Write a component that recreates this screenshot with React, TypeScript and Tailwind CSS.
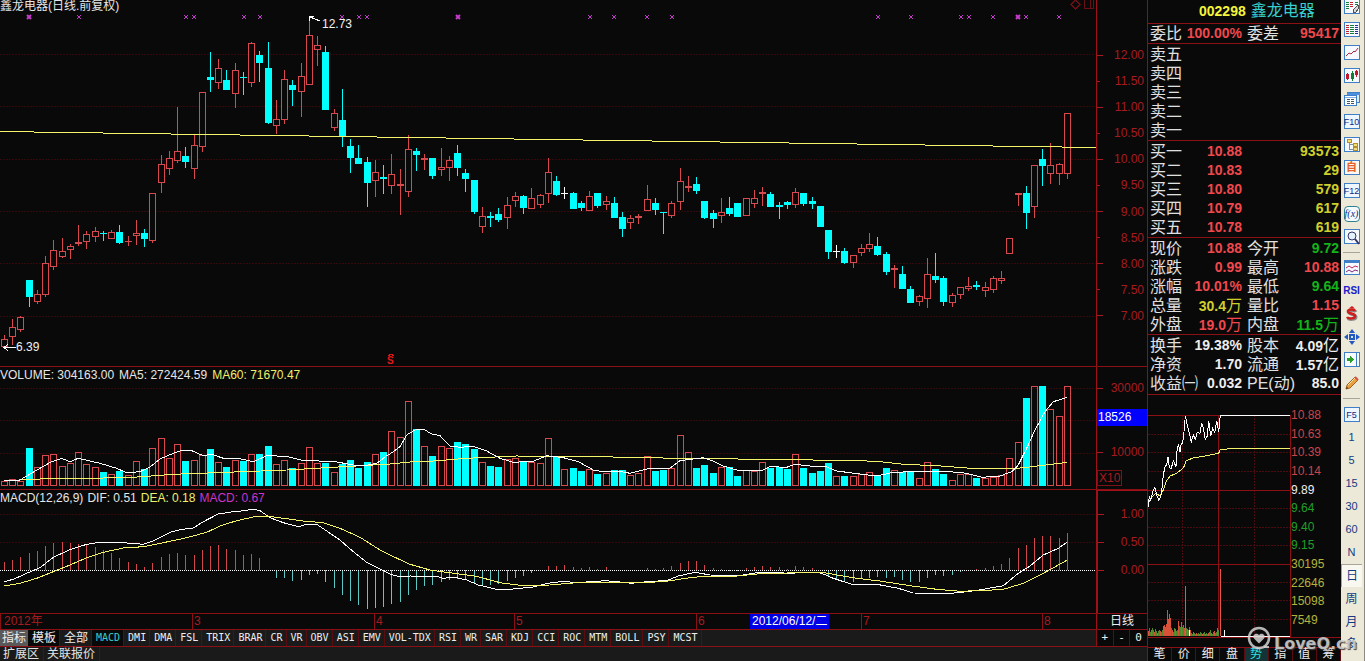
import React from "react";

type Kind = "u" | "d" | "n";
type Bar = [Kind, number, number, number, number, number, number];

// One row per trading day: kind, body top, body bottom, high, low, volume top, MACD tip.
// Volume and MACD heights are kept in thirds of a pixel below the volume pane's origin.
const DAYS: Bar[] = [
  ["u", 339, 347, 335, 348, 349, 591], ["u", 327, 337, 319, 345, 342, 585], ["u", 317, 330, 316, 332, 347, 576],
  ["d", 280, 297, 280, 307, 249, 564], ["u", 294, 302, 290, 304, 306, 557], ["u", 263, 295, 256, 297, 270, 543],
  ["u", 250, 267, 240, 270, 267, 533], ["u", 251, 257, 238, 258, 303, 530], ["u", 246, 250, 244, 259, 294, 533],
  ["u", 242, 243, 225, 246, 261, 538], ["u", 234, 242, 231, 249, 297, 540], ["u", 231, 237, 227, 242, 306, 545],
  ["d", 233, 233, 231, 241, 321, 555], ["u", 232, 239, 230, 239, 327, 565], ["d", 232, 243, 225, 244, 318, 579],
  ["u", 241, 241, 236, 246, 330, 591], ["u", 233, 236, 220, 245, 288, 597], ["d", 233, 239, 229, 247, 312, 606],
  ["u", 193, 241, 193, 243, 249, 594], ["u", 164, 183, 155, 193, 219, 576], ["u", 158, 169, 151, 175, 279, 567],
  ["u", 151, 161, 107, 163, 237, 564], ["d", 156, 162, 147, 168, 288, 570], ["u", 145, 169, 135, 179, 285, 570],
  ["u", 92, 147, 92, 152, 270, 555], ["d", 77, 80, 52, 92, 252, 543], ["u", 68, 83, 59, 89, 291, 540],
  ["d", 80, 90, 70, 90, 306, 552], ["u", 70, 94, 63, 108, 285, 555], ["d", 77, 77, 72, 95, 288, 570],
  ["u", 43, 83, 42, 87, 267, 567], ["d", 55, 63, 51, 82, 267, 579], ["d", 68, 123, 42, 124, 243, 617],
  ["u", 119, 126, 100, 134, 297, 640], ["u", 79, 120, 70, 124, 285, 640], ["d", 85, 90, 80, 106, 309, 648],
  ["u", 76, 92, 63, 117, 294, 645], ["u", 35, 85, 17, 85, 246, 630], ["u", 45, 50, 36, 66, 294, 627],
  ["d", 52, 110, 46, 110, 294, 651], ["u", 113, 128, 109, 131, 321, 669], ["d", 120, 136, 89, 147, 297, 690],
  ["d", 146, 158, 139, 173, 285, 708], ["d", 158, 164, 145, 164, 309, 720], ["d", 162, 183, 157, 207, 291, 732],
  ["u", 172, 181, 160, 197, 267, 728], ["d", 177, 178, 165, 194, 261, 726], ["u", 174, 186, 154, 194, 198, 717],
  ["u", 184, 185, 169, 215, 216, 711], ["u", 149, 192, 135, 197, 108, 690], ["d", 151, 155, 148, 171, 192, 675],
  ["u", 158, 159, 154, 170, 243, 664], ["d", 158, 176, 158, 179, 273, 660], ["u", 167, 170, 148, 176, 243, 651],
  ["u", 160, 168, 156, 181, 249, 645], ["d", 153, 168, 145, 176, 231, 642], ["d", 173, 179, 169, 192, 237, 645],
  ["d", 180, 212, 180, 214, 252, 654], ["u", 216, 227, 207, 233, 291, 660], ["d", 216, 217, 212, 227, 303, 660],
  ["d", 214, 220, 208, 222, 306, 657], ["u", 205, 218, 197, 229, 282, 648], ["u", 196, 201, 192, 207, 279, 639],
  ["d", 196, 208, 195, 214, 288, 632], ["u", 198, 209, 188, 209, 291, 624], ["u", 195, 205, 194, 208, 294, 617],
  ["u", 172, 194, 158, 203, 219, 602], ["d", 181, 195, 176, 196, 273, 604], ["n", 193, 193, 187, 199, 312, 600],
  ["d", 193, 209, 192, 209, 309, 606], ["d", 203, 208, 201, 211, 318, 610], ["u", 196, 211, 191, 211, 312, 606],
  ["d", 193, 206, 193, 208, 327, 612], ["u", 201, 205, 196, 210, 324, 606], ["d", 203, 218, 197, 218, 315, 614],
  ["d", 217, 229, 212, 237, 315, 617], ["u", 218, 223, 215, 229, 330, 617], ["u", 216, 217, 214, 224, 324, 617],
  ["u", 199, 211, 185, 211, 273, 610], ["d", 203, 210, 198, 215, 318, 612], ["d", 212, 212, 212, 234, 315, 610],
  ["u", 203, 216, 201, 218, 309, 602], ["u", 181, 202, 168, 210, 210, 594], ["u", 186, 187, 176, 192, 261, 587],
  ["d", 184, 191, 177, 194, 309, 588], ["d", 201, 218, 201, 219, 300, 600], ["d", 213, 219, 210, 228, 324, 610],
  ["u", 212, 216, 198, 223, 306, 612], ["d", 208, 214, 197, 216, 306, 617], ["d", 203, 217, 203, 217, 333, 617],
  ["u", 198, 216, 198, 216, 315, 610], ["u", 198, 204, 190, 208, 318, 606], ["u", 192, 193, 187, 206, 291, 602],
  ["d", 194, 207, 192, 207, 309, 605], ["d", 205, 206, 202, 219, 306, 606], ["d", 202, 205, 201, 209, 312, 611],
  ["u", 192, 205, 188, 208, 267, 602], ["d", 193, 204, 193, 206, 309, 605], ["d", 201, 204, 197, 209, 324, 610],
  ["d", 206, 227, 206, 227, 318, 617], ["d", 230, 252, 230, 259, 294, 632], ["n", 251, 251, 245, 258, 333, 642],
  ["d", 251, 263, 248, 264, 333, 652], ["u", 255, 263, 255, 268, 333, 652], ["u", 248, 253, 244, 256, 327, 642],
  ["u", 244, 249, 233, 252, 321, 639], ["d", 246, 255, 237, 256, 330, 636], ["d", 254, 272, 252, 275, 309, 639],
  ["u", 268, 269, 265, 288, 315, 637], ["d", 274, 289, 266, 289, 321, 645], ["d", 289, 303, 286, 303, 318, 652],
  ["u", 296, 302, 295, 306, 339, 652], ["u", 274, 299, 258, 308, 291, 639], ["d", 276, 280, 253, 283, 312, 630],
  ["d", 278, 302, 276, 306, 327, 633], ["u", 295, 303, 293, 307, 345, 630], ["u", 287, 295, 287, 299, 327, 621],
  ["u", 286, 289, 277, 291, 327, 617], ["d", 285, 287, 281, 290, 338, 612], ["u", 287, 291, 282, 297, 340, 609],
  ["u", 278, 290, 276, 293, 335, 603], ["u", 278, 281, 271, 284, 330, 597], ["u", 238, 254, 238, 254, 279, 579],
  ["u", 193, 194, 193, 206, 231, 549], ["d", 193, 213, 186, 229, 99, 540], ["u", 165, 207, 165, 218, 63, 519],
  ["d", 159, 166, 149, 186, 63, 513], ["u", 165, 174, 143, 184, 132, 513], ["u", 164, 174, 163, 185, 153, 519],
  ["u", 113, 174, 113, 179, 63, 503],
];

const dayX = (i: number) => Math.round(4 + i * 8.24);

const RED = "#d8494d";
const CYAN = "#00ffff";
const GRID = "#33090c";

// Each run is [x offset, "x,y x,y ..."], in thirds of a pixel.
type Run = [number, string];
const trace = (runs: Run[]) =>
  runs
    .flatMap(([dx, pts]) =>
      pts.split(" ").map((p) => {
        const [x, y] = p.split(",").map(Number);
        return `${((x + dx) / 3).toFixed(1)},${(y / 3).toFixed(1)}`;
      }),
    )
    .join(" ");

const DIF: Run[] = [
  [0, "12,650 40,643 80,625 120,608 160,577 210,554 260,538 300,532 370,533 430,538 460,528 510,502 540,494 580,489 610,470 655,447 700,440 735,437 755,432 780,437 810,458 850,473 895,485 920,478 950,478 980,498 1020,525 1060,560 1100,592 1140,612"],
  [1170, "0,627 30,636 60,633 140,634 160,640 190,636 230,645 265,660 320,673 360,673 430,666 475,655 520,649 560,653 645,647 690,651 725,655 780,649 830,647 865,633 915,622 960,630 1045,632 1110,622"],
  [2310, "0,622 60,625 130,621 155,625 190,640 245,658 320,658 385,670 430,684 545,685 600,679 640,673 700,662 745,625 780,603 820,570 865,550 892,531"],
];
const DEA: Run[] = [
  [0, "12,663 60,655 110,640 160,620 210,600 260,578 310,562 370,549 430,545 490,533 560,518 620,502 660,483 710,467 760,456 800,453 850,460 910,468 970,473 1020,490 1080,517 1140,555"],
  [1170, "0,570 60,598 120,615 200,626 260,634 330,653 400,662 480,660 560,653 640,652 740,653 820,650 900,638 950,633 1040,633 1110,626"],
  [2310, "0,627 100,621 150,621 190,628 260,640 330,648 420,662 500,673 570,679 650,676 700,673 760,655 820,625 892,585"],
];
const VOL5: Run[] = [
  [0, "12,347 60,345 80,333 120,310 155,290 185,280 210,290 235,280 300,295 350,310 380,323 420,320 450,306 480,282 520,265 545,256 575,257 610,272 635,268 670,280 720,281 760,290 800,272 860,274 910,287 1000,289 1060,300 1090,303 1130,295 1160,272"],
  [1170, "0,267 30,245 50,210 75,195 100,192 125,207 150,212 180,243 210,247 250,244 290,258 330,280 370,292 430,289 470,272 520,278 565,290 610,315 640,320 695,320 720,325 770,312 840,309 870,287 940,278 970,288 1000,303 1040,315 1120,315"],
  [2310, "0,305 50,307 76,298 120,303 170,306 200,318 270,327 320,333 370,322 430,320 480,318 540,320 590,325 635,337 690,333 725,320 745,300 770,250 795,195 825,140 850,110 892,97"],
];
const VOL60: Run[] = [
  [0, "12,347 120,342 270,340 400,337 520,328 680,322 860,315 1000,307 1170,297"],
  [1170, "60,291 130,288 230,280 380,273 530,275 800,277 840,281 1000,281"],
  [2310, "0,284 250,286 330,290 400,298 500,302 590,309 750,309 820,301 892,292"],
];
const TICK_PRICE: Run[] = [
  [0, "24,320 28,290 32,300 38,275 44,262 50,285 56,300 62,290 66,265 70,225 75,200 80,195 84,172 88,200 93,208 100,182 108,200 112,140 116,135 120,155 124,130 128,130 132,95 136,48 142,75 148,100 154,125 160,105 166,118 172,97 180,100 185,68 190,85 196,118 202,108 206,62 212,108 218,85 224,98 230,62 236,95 241,46 451,46"],
];
const TICK_AVG: Run[] = [
  [0, "24,310 35,292 48,280 60,288 70,270 78,245 90,228 110,220 125,208 132,200 138,182 160,174 200,167 236,160 241,149 280,145 451,145"],
];

const MARKS = [29, 79, 186, 194, 244, 260, 342, 359, 367, 458, 590, 614, 647, 672, 878, 911, 961, 969, 993, 1018, 1026, 1059];
const BOLD_MARKS = [29, 458, 1018];

function PriceChart() {
  return (
    <svg className="block h-[366px] w-full" viewBox="0 0 1096 366" preserveAspectRatio="none" shapeRendering="crispEdges" aria-label="日线">
      {[54, 106, 159, 211, 263, 316].map((y) => (
        <line key={y} x1="0" x2="1096" y1={y + 0.5} y2={y + 0.5} stroke={GRID} strokeDasharray="2 1" />
      ))}
      {MARKS.map((x) => (
        <path key={x} d={`M${x - 2} 15l4 4m0-4l-4 4`} stroke="#c33cc9" strokeWidth={BOLD_MARKS.includes(x) ? 2 : 1} shapeRendering="auto" />
      ))}
      {DAYS.map(([kind, top, bottom, high, low], i) => {
        const x = dayX(i);
        const color = kind === "u" ? RED : kind === "d" ? CYAN : "#ffffff";
        const thin = bottom - top < 2;
        return (
          <g key={i}>
            <line x1={x + 0.5} x2={x + 0.5} y1={high} y2={low} stroke={color} />
            {thin ? (
              <rect x={x - 3} y={top} width="7" height={bottom - top + 1} fill={color} />
            ) : kind === "u" ? (
              <rect x={x - 2.5} y={top + 0.5} width="6" height={bottom - top - 1} fill="#0a0909" stroke={RED} />
            ) : (
              <rect x={x - 3} y={top} width="7" height={bottom - top} fill={color} />
            )}
          </g>
        );
      })}
      <line x1="0" y1="131.5" x2="1096" y2="147.5" stroke="#f4f46a" />
      <path d="M309 16.5h5M309 16.5v4M310 17l10 4" stroke="#fff" fill="none" />
      <text x="322" y="28" fill="#f2f2f2" fontSize="12">12.73</text>
      <path d="M4 347.5h12M8 344l-4 3.500 4 3.500" stroke="#fff" fill="none" />
      <text x="16" y="351" fill="#f2f2f2" fontSize="12">6.39</text>
      <text x="387" y="364" fill="#e01818" fontSize="10" fontWeight="bold">S</text>
      <path d="M388 356l3-2 3 2" stroke="#e01818" fill="none" />
      <path d="M1071 4.500l4.500-4.500 4.500 4.500-4.500 4.500zM1084.500 0v8.500h9V0M1090.500 0v8" stroke="#6a1014" fill="none" />
    </svg>
  );
}

function VolumeChart() {
  return (
    <svg className="block h-[122px] w-full" viewBox="0 367 1096 122" preserveAspectRatio="none" shapeRendering="crispEdges" aria-label="VOLUME">
      {[388, 420, 453].map((y) => (
        <line key={y} x1="0" x2="1096" y1={y + 0.5} y2={y + 0.5} stroke={GRID} strokeDasharray="2 1" />
      ))}
      {DAYS.map(([kind, , , , , vol], i) => {
        const x = dayX(i);
        const y = 365 + Math.round(vol / 3);
        return kind === "d" ? (
          <rect key={i} x={x - 3} y={y} width="7" height={486 - y} fill={CYAN} />
        ) : (
          <rect key={i} x={x - 2.5} y={y + 0.5} width="6" height={485 - y} fill="none" stroke={RED} />
        );
      })}
      <g transform="translate(0 365)" fill="none">
        <polyline points={trace(VOL60)} stroke="#f4f46a" />
        <polyline points={trace(VOL5)} stroke="#fff" />
      </g>
    </svg>
  );
}

function MacdChart() {
  return (
    <svg className="block h-[123px] w-full" viewBox="0 490 1096 123" preserveAspectRatio="none" shapeRendering="crispEdges" aria-label="MACD">
      {[514, 542].map((y) => (
        <line key={y} x1="0" x2="1096" y1={y + 0.5} y2={y + 0.5} stroke={GRID} strokeDasharray="2 1" />
      ))}
      {DAYS.map(([, , , , , , tip], i) => {
        const x = dayX(i) + 0.5;
        return <line key={i} x1={x} x2={x} y1="570" y2={365 + tip / 3} stroke={tip < 617 ? "#d0474c" : "#5cc8c4"} />;
      })}
      <line x1="0" x2="1096" y1="570.5" y2="570.5" stroke="#fff" strokeDasharray="1 1" />
      <g transform="translate(0 365)" fill="none">
        <polyline points={trace(DIF)} stroke="#fff" />
        <polyline points={trace(DEA)} stroke="#f4f46a" />
      </g>
    </svg>
  );
}

const FLOW = [5, 8, 4, 6, 8, 6, 4, 7, 5, 3, 5, 6, 5, 4, 6, 10, 11, 9, 12, 26, 17, 22, 18, 8, 6, 4, 8, 7, 5, 6, 15, 10, 9, 14, 9, 11, 8, 8, 8, 7, 6, 9, 6, 3, 2, 4, 3, 2, 3, 2, 3, 2, 4, 3, 2, 3, 4, 2, 3, 2, 3, 4, 6, 3, 2, 4, 5, 3, 4, 8, 6];

function IntradayChart() {
  return (
    <svg className="block h-[252px] w-full" viewBox="1148 395 143 252" preserveAspectRatio="none" shapeRendering="crispEdges" aria-label="分时">
      <g stroke="#4a0c10" strokeDasharray="2 1">
        {[434, 452, 471, 508, 527, 545, 582, 600, 619].map((y) => (
          <line key={y} x1="1148" x2="1290" y1={y + 0.5} y2={y + 0.5} />
        ))}
        <path d="M1182.500 415v222M1254.500 415v222" />
      </g>
      <path d="M1148 415.500h143M1148 490.500h143M1148 564.500h143M1148 637.500h143M1218.500 415v222M1290.500 415v222" stroke="#8a1016" fill="none" />
      {FLOW.map((h, i) => (
        <rect key={i} x={1148 + i} y={636 - h} width="1" height={h} fill={i % 3 === 0 || (i > 15 && i < 23) ? "#d8523a" : "#4f8a2a"} />
      ))}
      <path d="M1185.500 586v50M1220.500 569v67" stroke="#e0564a" />
      <path d="M1221 636.500h69M1224.500 630v6M1189.500 630v6" stroke="#fff" />
      <g transform="translate(1140 400)" fill="none">
        <polyline points={trace(TICK_AVG)} stroke="#f4f46a" />
        <polyline points={trace(TICK_PRICE)} stroke="#fff" />
      </g>
    </svg>
  );
}

function AxisLabel({ children, minor }: { children: string; minor?: boolean }) {
  return (
    <div className="flex h-5 items-center justify-between pr-[3px] text-[#a51c20]">
      <span className={minor ? "h-px w-[3px] bg-[#a51c20]" : "h-px w-1.5 bg-[#a51c20]"} />
      <span>{children}</span>
    </div>
  );
}

const INDICATORS = ["MACD", "DMI", "DMA", "FSL", "TRIX", "BRAR", "CR", "VR", "OBV", "ASI", "EMV", "VOL-TDX", "RSI", "WR", "SAR", "KDJ", "CCI", "ROC", "MTM", "BOLL", "PSY", "MCST"];
const PRICES = ["12.00", "11.50", "11.00", "10.50", "10.00", "9.50", "9.00", "8.50", "8.00", "7.50", "7.00"];

function Charts() {
  return (
    <main className="flex min-w-0 flex-1 flex-col">
      <section className="flex border-b border-[#8a1016]">
        <div className="relative min-w-0 flex-1">
          <PriceChart />
          <h1 className="absolute left-0 top-0 -mt-0.5 text-xs leading-4 text-[#e6e6e6]">鑫龙电器(日线.前复权)</h1>
        </div>
        <div className="w-[51px] border-l border-[#a01018] pt-[45px]">
          <div className="flex h-[281px] flex-col justify-between">
            {PRICES.map((p, i) => (
              <AxisLabel key={p} minor={i % 2 === 1}>{p}</AxisLabel>
            ))}
          </div>
        </div>
      </section>

      <section className="flex border-b border-[#8a1016]">
        <div className="relative min-w-0 flex-1">
          <VolumeChart />
          <p className="absolute left-0 top-0 flex gap-[5px] text-xs leading-4 text-[#e6e6e6]">
            <span>VOLUME: 304163.00</span>
            <span>MA5: 272424.59</span>
            <span className="text-[#eef06a]">MA60: 71670.47</span>
          </p>
        </div>
        <div className="w-[51px] border-l border-[#a01018] pt-[11px]">
          <AxisLabel>30000</AxisLabel>
          <div className="mt-[11px] h-[17px] bg-[#0000ff] pl-px leading-4 text-white">18526</div>
          <div className="mt-4"><AxisLabel>10000</AxisLabel></div>
          <div className="mt-2 h-4 w-[25px] border border-[#7c1216] pl-px leading-[15px] text-[#a51c20]">X10</div>
        </div>
      </section>

      <section className="flex border-b border-[#8a1016]">
        <div className="relative min-w-0 flex-1">
          <MacdChart />
          <p className="absolute left-0 top-0 flex gap-1 text-xs leading-4 text-[#e6e6e6]">
            <span>MACD(12,26,9)</span>
            <span>DIF: 0.51</span>
            <span className="text-[#eef06a]">DEA: 0.18</span>
            <span className="text-[#cc33cc]">MACD: 0.67</span>
          </p>
        </div>
        <div className="flex w-[51px] flex-col gap-2 border-l-2 border-t border-[#a01018] pt-[13px]">
          <AxisLabel>1.00</AxisLabel>
          <AxisLabel>0.50</AxisLabel>
          <AxisLabel>0.00</AxisLabel>
        </div>
      </section>

      <section className="flex h-4 border-b border-[#8a1016] leading-[15px]">
        <div className="grid min-w-0 flex-1 grid-cols-[192fr_182fr_140fr_182fr_54fr_79fr_32fr_181fr_54fr] text-[#a51c20]">
          <span className="border-l border-[#8a1016] pl-[3px]">2012年</span>
          <span className="border-l border-[#8a1016] pl-px">3</span>
          <span className="border-l border-[#8a1016] pl-px">4</span>
          <span className="border-l border-[#8a1016] pl-px">5</span>
          <span className="border-l border-[#8a1016] pl-px">6</span>
          <span className="whitespace-nowrap bg-[#0000e6] pl-0.5 text-white">2012/06/12/二</span>
          <span />
          <span className="border-l border-[#8a1016] pl-px">7</span>
          <span className="border-l border-[#8a1016] pl-px">8</span>
        </div>
        <div className="w-[51px] border-l border-[#a01018] text-center text-[#eeeeee]">日线</div>
      </section>

      <nav className="flex h-[17px] border-b border-[#8a1016] bg-[#1b1a1a] leading-4 text-[#eeeeee]">
        <div className="flex min-w-0 flex-1">
          <button className="w-7 bg-[#5a5858]">指标</button>
          <button className="w-8 border-r border-[#5a0c10] bg-[#0a0909] pl-1 pr-[3px]">模板</button>
          <button className="w-8 border-r border-[#5a0c10] pl-1 pr-[3px]">全部</button>
          {INDICATORS.map((name) => (
            <button
              key={name}
              className={
                name === "MACD"
                  ? "border-r border-[#5a0c10] bg-[#0a0909] pl-1 pr-[3px] font-['DejaVu_Sans_Mono',monospace] text-[10px] text-[#35cfcf]"
                  : "border-r border-[#5a0c10] pl-1 pr-[3px] font-['DejaVu_Sans_Mono',monospace] text-[10px]"
              }
            >
              {name}
            </button>
          ))}
        </div>
        <div className="grid w-[51px] grid-cols-3 border-l border-[#8a1016] bg-[#0a0909] font-['DejaVu_Sans_Mono',monospace] text-[11px]">
          <button aria-label="放大" className="border-r border-[#5a0c10]">+</button>
          <button aria-label="缩小" className="border-r border-[#5a0c10]">-</button>
          <button>0</button>
        </div>
      </nav>

      <nav className="flex min-h-[14px] flex-1 items-start bg-[#1b1a1a] leading-[14px] text-[#e2e2e2]">
        <button className="border-r border-[#5a0c10] pl-[3px] pr-1">扩展区</button>
        <button className="border-r border-[#5a0c10] pl-[3px] pr-1">关联报价</button>
      </nav>
    </main>
  );
}

const TONE = {
  red: "text-[#f0484c]",
  green: "text-[#12b41a]",
  yellow: "text-[#cfcf2c]",
  white: "text-[#eeeeee]",
};
type Cell = [string, string, keyof typeof TONE];

function Quote({ cell }: { cell: Cell }) {
  const unit = /[万亿]$/.test(cell[1]) ? cell[1].slice(-1) : "";
  const amount = unit ? cell[1].slice(0, -1) : cell[1];
  return (
    <div className="flex min-w-0 flex-1 items-center justify-between whitespace-nowrap">
      <dt className="text-base leading-[19px] text-[#e0e0e0]">{cell[0]}</dt>
      <dd className={TONE[cell[2]]}>
        <span className="text-sm font-bold leading-[19px]">{amount}</span>
        {unit && <span className="text-base leading-[19px]">{unit}</span>}
      </dd>
    </div>
  );
}

function QuoteRow({ left, right }: { left: Cell; right: Cell }) {
  return (
    <div className="flex h-[19px] gap-[5px]">
      <Quote cell={left} />
      <Quote cell={right} />
    </div>
  );
}

const SELLS = ["卖五", "卖四", "卖三", "卖二", "卖一"];
const BUYS = [["买一", "10.88", "93573"], ["买二", "10.83", "29"], ["买三", "10.80", "579"], ["买四", "10.79", "617"], ["买五", "10.78", "619"]];
const STATS: [Cell, Cell][] = [
  [["现价", "10.88", "red"], ["今开", "9.72", "green"]],
  [["涨跌", "0.99", "red"], ["最高", "10.88", "red"]],
  [["涨幅", "10.01%", "red"], ["最低", "9.64", "green"]],
  [["总量", "30.4万", "yellow"], ["量比", "1.15", "red"]],
  [["外盘", "19.0万", "red"], ["内盘", "11.5万", "green"]],
];
const BASICS: [Cell, Cell][] = [
  [["换手", "19.38%", "white"], ["股本", "4.09亿", "white"]],
  [["净资", "1.70", "white"], ["流通", "1.57亿", "white"]],
  [["收益㈠", "0.032", "white"], ["PE(动)", "85.0", "white"]],
];
const LEVELS: [string, string][] = [
  ["10.88", "text-[#c8464a]"], ["10.63", "text-[#c8464a]"], ["10.39", "text-[#c8464a]"], ["10.14", "text-[#c8464a]"],
  ["9.89", "text-[#eeeeee]"], ["9.64", "text-[#1fa02a]"], ["9.40", "text-[#1fa02a]"], ["9.15", "text-[#1fa02a]"],
  ["30195", "text-[#b4b43c]"], ["22646", "text-[#b4b43c]"], ["15098", "text-[#b4b43c]"], ["7549", "text-[#b4b43c]"],
];

function QuotePanel() {
  return (
    <aside className="flex w-[194px] shrink-0 flex-col border-l border-[#8a1016]">
      <header className="flex h-6 items-center gap-[5px] whitespace-nowrap border-b border-[#8a1016] pb-0.5 pl-[51px]">
        <span className="text-sm font-bold text-[#f4f43c]">002298</span>
        <span className="text-base leading-5 text-[#35cfcf]">鑫龙电器</span>
      </header>
      <dl className="h-5 border-b border-[#8a1016] px-0.5">
        <QuoteRow left={["委比", "100.00%", "red"]} right={["委差", "95417", "red"]} />
      </dl>
      <ul className="border-b border-[#8a1016] px-0.5 pt-px text-base text-[#e0e0e0]">
        {SELLS.map((s) => (
          <li key={s} className="h-[19px] leading-[19px]">{s}</li>
        ))}
      </ul>
      <div className="border-b border-[#8a1016] pt-px">
        <table className="w-full">
          <tbody>
            {BUYS.map(([label, price, volume]) => (
              <tr key={label} className="h-[19px]">
                <th scope="row" className="h-[19px] p-0 pl-0.5 text-left text-base font-normal leading-[19px] text-[#e0e0e0]">{label}</th>
                <td className="w-[60px] p-0 text-right text-sm font-bold leading-[19px] text-[#f0484c]">{price}</td>
                <td className="w-[99px] p-0 pr-0.5 text-right text-sm font-bold leading-[19px] text-[#cfcf2c]">{volume}</td>
              </tr>
            ))}
          </tbody>
        </table>
      </div>
      <dl className="border-b border-[#8a1016] px-0.5 pt-px">
        {STATS.map(([a, b]) => <QuoteRow key={a[0]} left={a} right={b} />)}
      </dl>
      <dl className="border-b border-[#8a1016] px-0.5 py-px">
        {BASICS.map(([a, b]) => <QuoteRow key={a[0]} left={a} right={b} />)}
      </dl>
      <div className="flex">
        <div className="min-w-0 flex-1"><IntradayChart /></div>
        <div className="flex w-[50px] flex-col pt-[11px]">
          <div className="flex h-[223px] flex-col justify-between">
            {LEVELS.map(([value, tone]) => (
              <span key={value} className={tone + " leading-[18px]"}>{value}</span>
            ))}
          </div>
          <div className="mt-2 h-px bg-[#8a1016]" />
        </div>
      </div>
      <nav className="grid flex-1 grid-cols-8 border-t border-[#8a1016] bg-[#0a0909] text-center leading-[13px] text-[#eeeeee]">
        {["笔", "价", "细", "盘", "势", "指", "值", "筹"].map((t) => (
          <button key={t} className={t === "势" ? "border-r border-[#5a0c10] bg-[#123436] text-[#2fe0e0]" : "border-r border-[#5a0c10]"}>
            {t}
          </button>
        ))}
      </nav>
    </aside>
  );
}

function Frame({ children }: { children?: React.ReactNode }) {
  return (
    <svg width="16" height="16" viewBox="0 0 16 16" fill="none" shapeRendering="crispEdges">
      <rect x="0.500" y="0.500" width="15" height="14" fill="#f6f9ff" stroke="#3f7fc8" />
      {children}
    </svg>
  );
}

function Caption({ children }: { children: string }) {
  return (
    <span className="flex h-[15px] w-4 items-center justify-center border border-[#3f7fc8] bg-[#eef6ff] text-[9px] text-[#102a80]">
      {children}
    </span>
  );
}

const TOOLS: [string, React.ReactNode][] = [
  ["行情", <Frame><path d="M2 3.500h3M2 5.500h3M2 7.500h3M2 9.500h3" stroke="#16803a" /><path d="M6 3.500h3M6 5.500h3M6 7.500h3" stroke="#c02030" /><path d="M11 3.500h3M11 5.500h3" stroke="#16803a" /><path d="M14 6l-5 5v2h3l3-4z" fill="#d8d8d8" stroke="#555" /></Frame>],
  ["报价", <Frame><path d="M2 3.500h3M2 5.500h3M2 7.500h3M2 9.500h3M2 11.500h3" stroke="#c02030" /><path d="M6 3.500h4M6 5.500h4M6 7.500h4M6 9.500h4M6 11.500h4" stroke="#16803a" /><path d="M11 3.500h3M11 5.500h3M11 7.500h3M11 9.500h3M11 11.500h3" stroke="#2030a0" /></Frame>],
  ["分时", <Frame><path d="M2 11l3-3 2 1 3-3 1 1 3-4" stroke="#b02838" shapeRendering="auto" /></Frame>],
  ["K线", <Frame><path d="M3.500 5v7M12.500 1.500v7" stroke="#c01828" /><path d="M2 6h3v5H2zM11 3h3v4h-3z" fill="#c01828" /><path d="M8.500 3v10" stroke="#108030" /><path d="M7 5h3v6H7z" fill="#108030" /></Frame>],
  ["窗口", <svg width="16" height="16" viewBox="0 0 16 16" fill="none" shapeRendering="crispEdges"><rect x="3.500" y="1.500" width="12" height="10" fill="#dcecff" stroke="#3f7fc8" /><path d="M3 3h13" stroke="#4f8fe0" strokeWidth="2" /><rect x="0.500" y="4.500" width="12" height="10" fill="#fff" stroke="#3f7fc8" /><path d="M1 6h11" stroke="#7fb0ea" /><path d="M3 8.500h3M7 8.500h3M3 10.500h3M7 10.500h3M3 12.500h3M7 12.500h3" stroke="#456" /></svg>],
  ["F10", <Caption>F10</Caption>],
  ["板块", <Frame><path d="M5.500 5v7h4M5.500 7.500h4" stroke="#7890a0" /><path d="M3 2h4v3H3zM9 6h4v3H9zM9 10h4v3H9z" fill="#f4dc70" stroke="#b09030" /></Frame>],
  ["自选", <span className="flex h-[15px] w-4 items-center justify-center border border-[#3f7fc8] bg-[#fff8f0] text-[11px] font-bold text-[#e0642c]">自</span>],
  ["F12", <Caption>F12</Caption>],
  ["公式", <span className="flex h-4 w-4 items-center justify-center rounded-sm border border-[#2f8090] bg-[#f4fbff] font-['Liberation_Serif',serif] text-[10px] italic text-[#102a80]">f(x)</span>],
  ["查找", <Frame><circle cx="8" cy="7" r="4" fill="#e4f2ff" stroke="#336" shapeRendering="auto" /><path d="M11 10l4 5" stroke="#336" strokeWidth="2" shapeRendering="auto" /></Frame>],
];
const DRAW: [string, React.ReactNode][] = [
  ["指标线", <Frame><path d="M1 2h14" stroke="#3f7fc8" strokeWidth="2" /><path d="M2 8l3-2 3 2 3-2 3 1" stroke="#c02860" shapeRendering="auto" /><path d="M2 12l3-2 3 2 3-2 3 1" stroke="#802880" shapeRendering="auto" /></Frame>],
  ["RSI", <span className="text-[10px] font-bold text-[#2020c8]">RSI</span>],
  ["除权", <svg width="16" height="16" viewBox="0 0 16 16" fill="none"><path d="M12 6c-1-2-8-2-7 1 1 2 7 1 7 4 0 3-7 3-8 1" stroke="#888" strokeWidth="3" /><path d="M11 5c-1-2-8-2-7 1 1 2 7 1 7 4 0 3-7 3-8 1" stroke="#d01c1c" strokeWidth="2.500" /><path d="M4.500 2.500L8 0l3 2.500z" fill="#d01c1c" /></svg>],
  ["移动", <svg width="16" height="16" viewBox="0 0 16 16"><path d="M8 0l3 4H5zM8 16l3-4H5zM0 8l4-3v6zM16 8l-4-3v6z" fill="#2458c0" /><path d="M5 5h6v6H5z" fill="#2458c0" /><path d="M7 7h2v2H7z" fill="#cfe4ff" /></svg>],
  ["加入", <Frame><path d="M12.500 1v13" stroke="#3f7fc8" /><path d="M3 6h3V4l4 3.500L6 11V9H3z" fill="#28a028" /></Frame>],
  ["画线", <svg width="16" height="16" viewBox="0 0 16 16" fill="none"><path d="M2 14l1-4L11 2l3 3-8 8z" fill="#e8a040" stroke="#a06020" /><path d="M11 2l3 3" stroke="#d05050" strokeWidth="2" /><path d="M4 10l7-7" stroke="#ffe0a0" /><path d="M2 14l1-2 1 1z" fill="#222" /></svg>],
];
const PERIODS = ["1", "5", "15", "30", "60", "N"];

function Tool({ label, children }: { label: string; children: React.ReactNode }) {
  return <button aria-label={label} className="flex h-[23px] shrink-0 items-center justify-center">{children}</button>;
}

function Toolbar() {
  return (
    <nav className="flex w-6 shrink-0 flex-col border-r border-[#8c8a80] bg-[#ece9d8] pr-0.5 text-[#143a82]">
      <button aria-label={TOOLS[0][0]} className="flex h-[18px] shrink-0 items-end justify-center overflow-hidden pb-[3px]">{TOOLS[0][1]}</button>
      {TOOLS.slice(1).map(([label, icon]) => <Tool key={label} label={label}>{icon}</Tool>)}
      <div className="flex h-2 items-center px-0.5"><div className="h-px w-full bg-[#a8a598]" /></div>
      {DRAW.map(([label, icon]) => <Tool key={label} label={label}>{icon}</Tool>)}
      <div className="flex h-[9px] items-center px-0.5"><div className="h-px w-full bg-[#a8a598]" /></div>
      <Tool label="F5"><Caption>F5</Caption></Tool>
      {PERIODS.map((p) => (
        <button key={p} className="h-[23px] shrink-0 text-center text-[11px]">{p}</button>
      ))}
      <button className="h-[23px] shrink-0 border-l border-t border-[#a8a598] bg-[#f8f7f0] text-xs">日</button>
      <button className="h-[23px] shrink-0 text-xs">周</button>
      <button className="h-[23px] shrink-0 text-xs">月</button>
      <button className="shrink-0 text-xs leading-[23px]">多</button>
    </nav>
  );
}

export default function App() {
  return (
    <div className="relative flex min-h-screen w-full overflow-hidden bg-[#0a0909] font-['Liberation_Sans','Noto_Sans_CJK_SC',sans-serif] text-xs">
      <Charts />
      <QuotePanel />
      <Toolbar />
      <div className="pointer-events-none absolute bottom-[9px] right-2 flex items-end gap-[3px] text-[#d4d4d4]/85">
        <svg className="mb-0.5" width="24" height="24" viewBox="0 0 24 24" fill="none">
          <circle cx="12" cy="12" r="10" stroke="currentColor" strokeWidth="2.500" />
          <path d="M12 17.500L7 12.500C4.500 9.500 9 5.500 12 9c3-3.500 7.500.5 5 3.500z" fill="currentColor" />
          <path d="M17 21h5" stroke="currentColor" strokeWidth="2" />
        </svg>
        <span className="font-['DejaVu_Sans',sans-serif] text-base font-bold leading-4 [text-shadow:1px_1px_1px_#444]">LoveQ.cn</span>
      </div>
    </div>
  );
}
